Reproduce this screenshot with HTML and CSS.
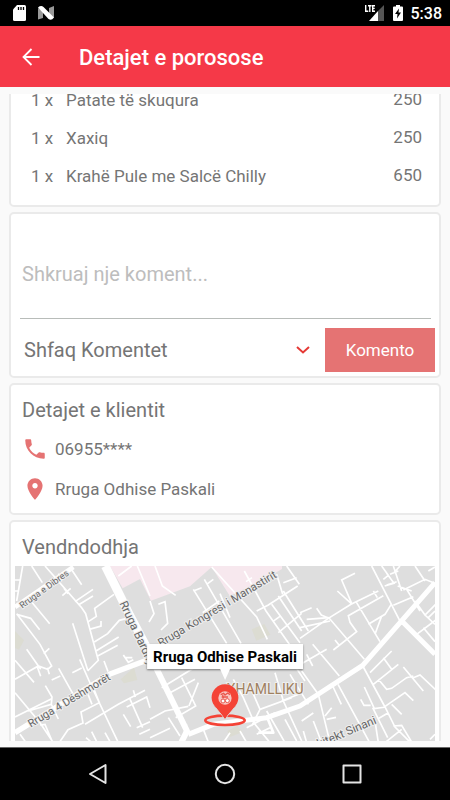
FILE: index.html
```html
<!DOCTYPE html>
<html lang="sq">
<head>
<meta charset="utf-8">
<meta name="viewport" content="width=device-width, initial-scale=1">
<title>Detajet e porosose</title>
<link rel="stylesheet" href="styles.css">
</head>
<body>
<div class="status">
  <svg class="status-icon" width="13" height="16" viewBox="0 0 13 16" aria-hidden="true"><path fill="#fff" d="M4 0h7.500q1.500 0 1.500 1.500v13q0 1.500-1.500 1.500h-10Q0 16 0 14.500V4.500z"/><path stroke="#000" stroke-width="1.300" d="M5.500 2v3M8 2v3M10.500 2v3"/></svg>
  <svg class="status-icon" width="16" height="14" viewBox="0 0 16 14" aria-hidden="true"><path fill="#999" d="M0 2l5 3v7l-5 1.500zM16 0v12l-5-4V2z"/><path fill="#fff" d="M0 1.500Q3-1 5.500 1L16 11.500Q13.500 15 10.500 13z"/></svg>
  <span class="status-space"></span>
  <svg class="signal" width="19" height="16" viewBox="0 0 19 16" aria-label="LTE"><path fill="#555" d="M19 0v16h-6V6z"/><path fill="#fff" d="M13 6v10H4z"/><path fill="none" stroke="#fff" stroke-width="1.400" d="M.7 0v6.300h2.600M3 .7h3.600M4.800 .7V7M10 .7H7.700v5.600H10M7.700 3.400h2"/></svg>
  <svg class="battery" width="10" height="16" viewBox="0 0 10 16" aria-hidden="true"><path fill="#fff" d="M3 0h4v1.500h2q1 0 1 1V15q0 1-1 1H1q-1 0-1-1V2.500q0-1 1-1h2z"/><path d="M6 3.500L2 9h2.500L4 13.500 8 7.500H5.500z"/></svg>
  <time class="clock">5:38</time>
</div>
<header class="appbar">
  <button class="back" aria-label="Kthehu"><svg width="18" height="18" viewBox="0 0 18 18"><path fill="none" stroke="#fff" stroke-width="1.800" d="M17.500 9H1.500M9.500 1L1.500 9l8 8"/></svg></button>
  <h1 class="title">Detajet e porosose</h1>
</header>
<main class="scroller">
  <section class="card order">
    <table class="items">
      <tr><td class="qty">1 x</td><td>Patate të skuqura</td><td class="price">250</td></tr>
      <tr><td class="qty">1 x</td><td>Xaxiq</td><td class="price">250</td></tr>
      <tr><td class="qty">1 x</td><td>Krahë Pule me Salcë Chilly</td><td class="price">650</td></tr>
    </table>
  </section>
  <section class="card comment">
    <textarea class="comment-box" aria-label="Koment" placeholder="Shkruaj nje koment..."></textarea>
    <div class="comment-bar">
      <button class="toggle" aria-expanded="false">Shfaq Komentet
        <svg width="14" height="9" viewBox="0 0 14 9" aria-hidden="true"><path fill="none" stroke="#e53935" stroke-width="2" d="M1 1l6 5.500L13 1"/></svg>
      </button>
      <button class="send">Komento</button>
    </div>
  </section>
  <section class="card client">
    <h2 class="heading">Detajet e klientit</h2>
    <p class="contact"><svg width="26" height="26" viewBox="0 0 24 24" aria-hidden="true"><path fill="#e57373" d="M6.620 10.790c1.440 2.830 3.760 5.140 6.590 6.590l2.200-2.200c.27-.27.67-.36 1.020-.24 1.120.37 2.330.57 3.570.57.550 0 1 .45 1 1V20c0 .55-.45 1-1 1-9.390 0-17-7.610-17-17 0-.55.45-1 1-1h3.500c.55 0 1 .45 1 1 0 1.250.2 2.450.57 3.570.11.35.03.74-.25 1.020z"/></svg>06955****</p>
    <p class="contact"><svg width="26" height="26" viewBox="0 0 24 24" aria-hidden="true"><path fill="#e57373" d="M12 2C8.130 2 5 5.130 5 9c0 5.250 7 13 7 13s7-7.750 7-13c0-3.870-3.130-7-7-7zm0 9.500c-1.380 0-2.500-1.120-2.500-2.500s1.120-2.500 2.500-2.500 2.500 1.120 2.500 2.500-1.120 2.500-2.500 2.500z"/></svg>Rruga Odhise Paskali</p>
  </section>
  <section class="card location">
    <h2 class="heading">Vendndodhja</h2>
    <div class="map">
      <svg class="map-art" viewBox="45 15 1260 540" role="img" aria-label="Harta">
        <path fill="#dedede" d="M45 15h1260v540H45z"/>
        <path fill="#f7e8ee" d="M330 15l38 67 52-28 33 65 117-43 65-58 54 86 80-36 77-44V15z"/>
        <path fill="#dcdcd2" d="M45 210l27 28-15 28-12-5zM362 355l40-36 10 38-40 10zM755 205l38-16 18 32-42 18zM682 510l30-15 16 18-38 15z"/>
        <g class="lane">
          <path d="M68 15L50 120M45 57h15M45 90h8M95 15l32 50M135 15l110 125 12 18 38 140-32 32M175 38l10 22M216 28l29 43M187 104l25-22M192 82l12 16M225 122l54-37M235 132l44-27M95 123l54 65M50 158l70 92 35 65-12 10-28-10-70 40M50 160l42 12 27 34M131 278l17-16M80 265l42 60M112 318l10 28M142 320l6 20M45 298l57 66M218 187l45 140M265 182l24-16-5-24 58-42M268 205l35-10v-15M283 243l40-25 35-40 20-5M288 270l68-42M293 285l60-32M239 295l35 80 80 168M312 300l12 32M217 335l28-14M176 322l42 75M155 357l26-12M136 374l20 34-2 22-70 20M45 395l75 90 40 60M45 468l110-55M155 432l20 42M120 492l15-2 22 52M60 520l16 22M264 400l12 30M278 375l20 50-55 28 6 33-45 20-25 37M255 490l100-60 80-42M370 460l22 37M388 410l40 90M400 388l6 20M410 500l40-18M418 520l32-15M275 512l15 30M258 530l14 12M315 515l15 27M370 282l15 22 15-8M375 290h22"/>
          <path d="M355 45l40-30M412 15l38 90M465 15l22 60 40 28M475 130l20-8 8 65-20 20M580 85l100 162M608 155l50-35M580 90l25-10M613 55l110 192M620 70l20-15M635 18l135 150 32 67M660 98l30 72M733 30l65 120 70 100M738 62l18-12M740 92l22-8M770 150l35-18 88-57M815 130l85 115M835 105l70 105M850 90l75 120M835 215l70-58M818 182l25-18M860 15l38 55M850 65l40-15M920 175l66-5M830 40l18 60M450 120l12 38-15 25"/>
          <path d="M450 440l-10-32-60 30M450 475l45-25 70-14M485 380l95-58M510 395l75-40M545 350l42 85-60 35M595 365l-28 70M450 530l60-28M505 470l35 55M610 505l15 38M700 355l30 55 35 80 45 55M745 365l35 80 95-35M780 445l-25 50M825 335l25 85 55 120M740 500l85-45M800 450l55 95M845 420l60-24M855 475l35 65M770 520l40-20M690 515l-20 30M720 510l20 35M560 490l-15 50M870 340l55 90M865 285l50 75"/>
          <path d="M1065 37l-40 20 30 70M1012 90l42 38M900 232l85-60 68-42 82-40M1120 90l12 20M1150 104l-105 60 5 20 20 28-70 55M1068 122l72 120M1105 190l50-30 20-32M1145 165l-20 55M950 142l14 20 24 10 105 123M990 180l-90 20M900 155l35-15M1005 237l12 15M938 250l80 95M902 310l78-45M920 280l18 35M905 330l50 70M1115 15l90 175M1145 15l20 28-15 12M1160 37l22 30-28 8M1170 40l25-10M1180 15l25 75M1200 15l-18 20M1160 72l30-10M1235 90l-42-15M1210 87l65-32 35 14M1245 15l30 45M1285 30l20-12M1180 133l60-26M1245 120l30 42 35-35M1275 162l30 28M1220 85l40 65M1285 170l20-20M1250 220l60-45M1270 200l35 42M1110 335l65-65M1150 290l25 35M1120 370l75-60M1135 355l25 30 15-3 45-32 20-5M1210 318l60 72M1240 350l20-8 47 44M1150 440l65-45 25 24M1175 430l30 30M1090 318l65 120 30 60 45 45M1093 378l30 65 35-5M1082 415l10 18h20M1118 440l45 90M1165 455l-28 17M1205 505l-50 40M1180 495l25-2 30 50M1290 535l15-15M998 375l26 55M955 400l35 145M1014 370l95 175M975 465l20-25M980 475l28-6M940 480l25 65M905 480l35-24M910 510l10 35M1125 480l10 65"/>
        </g>
        <g class="street">
          <path stroke-width="14" d="M45 138L220 18"/>
          <path stroke-width="16" d="M45 515l285-176 120-45"/>
          <path stroke-width="26" d="M316 15l72 145 55 105"/>
          <path stroke-width="18" d="M435 250l38 80 88 180-20 40"/>
          <path stroke-width="15" d="M565 520l75-30 160-20 100-35 188-122L1305 65M1203 178l102 102"/>
          <path stroke-width="8" d="M775 515h45l-18-45"/>
        </g>
        <g class="label">
          <text font-size="27" transform="translate(67 143) rotate(-36)">Rruga e Dibres</text>
          <text font-size="35" transform="translate(358 127) rotate(65)">Rruga Bardhyl</text>
          <text font-size="33" transform="translate(92 500) rotate(-31)">Rruga 4 Dëshmorët</text>
          <text font-size="34" transform="translate(482 258) rotate(-31)">Rruga Kongresi i Manastirit</text>
          <text font-size="35" transform="translate(925 574) rotate(-23)">Arkitekt Sinani</text>
          <text class="district" font-size="42" x="680" y="399">XHAMLLIKU</text>
        </g>
        <g fill="#f44336">
          <ellipse cx="675" cy="478" rx="59" ry="14" fill="none" stroke="#f44336" stroke-width="8"/>
          <path d="M675 475q-9-13-22-28-18-18-18-37a40 40 0 0 1 80 0q0 19-18 37-14 15-22 28z" stroke="#dedede" stroke-width="3"/>
          <path d="M675 473q-9-13-22-28-18-18-18-35a40 40 0 0 1 80 0q0 17-18 35-14 15-22 28z"/>
          <circle cx="675" cy="411" r="20" fill="#f8c6c0"/>
          <path fill="none" stroke="#e9574c" stroke-width="4" d="M662 401l9-4 4 5 8-6 7 5M665 408h19M668 402l2 10"/>
          <circle cx="669" cy="420" r="6" fill="#fff" stroke="#e9574c" stroke-width="3"/><circle cx="682" cy="419" r="6" fill="#fff" stroke="#e9574c" stroke-width="3"/>
        </g>
      </svg>
      <div class="callout">Rruga Odhise Paskali</div>
    </div>
  </section>
</main>
<nav class="navbar">
  <button class="nav-btn" aria-label="Prapa"><svg width="22" height="22" viewBox="0 0 22 22"><path d="M18.500 2v18L3 11z"/></svg></button>
  <button class="nav-btn" aria-label="Kreu"><svg width="22" height="22" viewBox="0 0 22 22"><circle cx="11" cy="11" r="9.200"/></svg></button>
  <button class="nav-btn" aria-label="Të fundit"><svg width="22" height="22" viewBox="0 0 22 22"><path d="M2.500 2.500h17v17h-17z"/></svg></button>
</nav>
</body>
</html>
```

FILE: styles.css
```css
* { box-sizing: border-box; }
body {
  margin: 0;
  height: 100vh;
  display: flex;
  flex-direction: column;
  overflow: hidden;
  background: #fafafa;
  color: #757575;
  font: 17px/22px Roboto, sans-serif;
}
button, textarea { font: inherit; border: 0; padding: 0; background: none; }
h1, h2, p { margin: 0; font-weight: 400; }
svg { flex: none; }

.status {
  flex: none;
  height: 26px;
  padding: 0 8px 0 13px;
  display: flex;
  align-items: center;
  background: #000;
  color: #fff;
}
.status-icon { margin-right: 12px; }
.status-space { flex: 1; }
.signal { margin-right: 9px; }
.battery { margin-right: 8px; }
.clock { padding-top: 2px; font-size: 16px; font-weight: 500; }

.appbar {
  flex: none;
  height: 61px;
  padding: 0 22px;
  display: flex;
  align-items: center;
  gap: 39px;
  background: #f53948;
  color: #fff;
}
.back { display: flex; }
.title { font-size: 22px; font-weight: 500; line-height: 26px; padding-top: 2px; }

.scroller {
  flex: 1;
  min-height: 0;
  margin: 7px 0 6px;
  padding: 0 9px;
  overflow: hidden;
}
.card {
  margin-bottom: 5px;
  background: #fff;
  border: 2px solid #eaeaea;
  border-radius: 5px;
}
.order { margin-top: -15px; padding: 0 17px 10px 20px; }
.items { width: 100%; border-collapse: collapse; }
.items td { height: 38px; padding: 0; }
.items .qty { width: 35px; }
.items .price { text-align: right; padding-bottom: 2px; }

.comment { padding: 0 4px 4px; }
.comment-box {
  display: block;
  width: calc(100% - 9px);
  height: 105px;
  margin: 0 4px 9px 5px;
  padding: 48px 2px 0;
  border-bottom: 1px solid #b8bcb9;
  font-size: 20px;
  line-height: 24px;
  color: #757575;
  resize: none;
  overflow: hidden;
}
.comment-box::placeholder { color: #bdbdbd; opacity: 1; }
.comment-bar { display: flex; height: 44px; }
.toggle {
  flex: 1;
  display: flex;
  align-items: center;
  justify-content: space-between;
  padding: 0 15px 0 9px;
  font-size: 20px;
  color: #757575;
}
.send { width: 110px; background: #e57373; color: #fff; }

.heading { padding-left: 11px; font-size: 20px; line-height: 24px; }
.client { padding: 13px 0 4px; }
.client .heading { margin-bottom: 7px; }
.contact { display: flex; align-items: center; gap: 7px; height: 40px; padding-left: 11px; }
.location { padding: 13px 4px 4px; }
.location .heading { padding-left: 7px; margin-bottom: 7px; }
.map { position: relative; }
.map-art { display: block; width: 100%; }
.lane { fill: none; stroke: #fff; stroke-width: 5; }
.street { fill: none; stroke: #fff; stroke-linejoin: round; }
.label { fill: #666; stroke: #eee; stroke-width: 6; paint-order: stroke; }
.district { fill: #a08060; }
.callout {
  position: absolute;
  left: 50%;
  top: 78px;
  transform: translateX(-50%);
  padding: 2px 6px 1px;
  background: #fff;
  box-shadow: 0 1px 2px #777;
  color: #000;
  font-size: 15px;
  font-weight: 700;
  white-space: nowrap;
}
.callout::after {
  content: "";
  position: absolute;
  left: 50%;
  top: 100%;
  margin-left: -5px;
  border: 5px solid transparent;
  border-top: 11px solid #fff;
  border-bottom: 0;
}

.navbar {
  flex: none;
  height: 53px;
  padding: 0 35px;
  display: flex;
  background: #000;
  border-top: 1px solid #666;
}
.nav-btn { flex: 1; display: flex; align-items: center; justify-content: center; }
.nav-btn svg { fill: none; stroke: #e4e4e4; stroke-width: 2; stroke-linejoin: round; }
```
